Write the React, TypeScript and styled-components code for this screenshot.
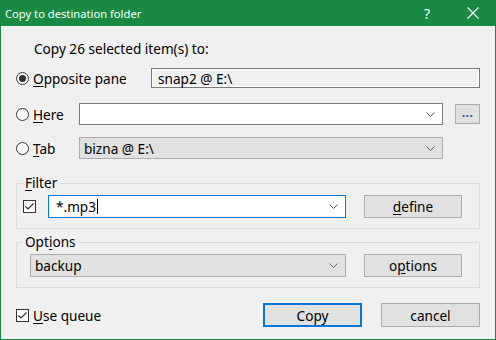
import React from "react";
import styled, { createGlobalStyle } from "styled-components";

const GlobalStyle = createGlobalStyle`
  html, body {
    margin: 0;
    padding: 0;
    background: #f0f0f0;
  }
  * {
    box-sizing: border-box;
  }
`;

const green = "#188a44";
const uiFont = `"Noto Sans", "DejaVu Sans", sans-serif`;

const Window = styled.div`
  width: 496px;
  height: 340px;
  display: flex;
  flex-direction: column;
  background: #f0f0f0;
  border: 1px solid ${green};
  border-top: none;
  font-family: ${uiFont};
  font-size: 13.6px;
  color: #000;
`;

const TitleBar = styled.div`
  height: 26px;
  margin: 0 -1px;
  background: ${green};
  color: #fff;
  display: flex;
  align-items: center;
  font-size: 11.2px;
  padding-left: 5px;
`;

const Title = styled.span`
  flex: 1;
`;

const TitleButton = styled.span`
  width: 46px;
  display: flex;
  justify-content: center;
  align-items: center;
  font-size: 14px;
`;

const Body = styled.div`
  width: 494px;
  flex: 1;
  padding: 14px 15px 0 15px;
  display: flex;
  flex-direction: column;
  align-items: flex-start;
`;

const Heading = styled.div`
  margin-left: 18px;
  height: 18px;
  line-height: 18px;
`;

const Row = styled.div<{ $top: number; $h: number }>`
  width: 464px;
  display: flex;
  align-items: center;
  margin-top: ${(p) => p.$top}px;
  height: ${(p) => p.$h}px;
`;

const Choice = styled.label<{ $w: number }>`
  width: ${(p) => p.$w}px;
  display: flex;
  align-items: center;
  gap: 4px;
  flex-shrink: 0;
`;

const Radio = styled.span<{ $on?: boolean }>`
  width: 13px;
  height: 13px;
  border-radius: 50%;
  border: 1px solid #333;
  background: #fff;
  display: flex;
  align-items: center;
  justify-content: center;
  &::after {
    content: "";
    width: 7px;
    height: 7px;
    border-radius: 50%;
    background: #333;
    display: ${(p) => (p.$on ? "block" : "none")};
  }
`;

const Check = styled.span`
  width: 13px;
  height: 13px;
  border: 1px solid #333;
  background: #fff;
  display: flex;
  align-items: center;
  justify-content: center;
  flex-shrink: 0;
`;

const U = styled.span`
  text-decoration: underline;
  text-underline-offset: 2px;
`;

const Field = styled.div<{ $w: number; $h: number; $kind: "plain" | "white" | "gray" | "focus" }>`
  width: ${(p) => p.$w}px;
  height: ${(p) => p.$h}px;
  flex-shrink: 0;
  display: flex;
  align-items: center;
  padding-left: ${(p) => (p.$kind === "plain" ? 6 : 4)}px;
  border: 1px solid
    ${(p) =>
      p.$kind === "focus" ? "#0078d7" : p.$kind === "gray" ? "#adadad" : "#7a7a7a"};
  background: ${(p) =>
    p.$kind === "white" || p.$kind === "focus" ? "#fff" : p.$kind === "gray" ? "#e1e1e1" : "#f0f0f0"};
  box-shadow: ${(p) => (p.$kind === "plain" ? "inset 0 0 0 1px #fff" : "none")};
`;

const FieldText = styled.span`
  flex: 1;
  display: flex;
  align-items: center;
`;

const Caret = styled.span`
  width: 1px;
  height: 15px;
  background: #000;
  margin-left: 1px;
`;

const Chevron = styled.svg`
  width: 9px;
  height: 5px;
  margin-right: 7px;
`;

const Button = styled.div<{ $w: number; $h: number; $default?: boolean }>`
  width: ${(p) => p.$w}px;
  height: ${(p) => p.$h}px;
  flex-shrink: 0;
  display: flex;
  align-items: center;
  justify-content: center;
  background: #e1e1e1;
  border: ${(p) => (p.$default ? "2px solid #0078d7" : "1px solid #adadad")};
`;

const Dots = styled.span`
  color: #1c4fa0;
  font-weight: bold;
  font-size: 12px;
  letter-spacing: 0.5px;
  margin-top: -4px;
`;

const Group = styled.div<{ $top: number }>`
  width: 464px;
  margin-top: ${(p) => p.$top}px;
  padding-bottom: 10px;
  border: 1px solid #dcdcdc;
  display: flex;
  flex-direction: column;
`;

const GroupTitle = styled.span`
  align-self: flex-start;
  margin: -8px 0 0 6px;
  padding: 0 2px;
  height: 14px;
  line-height: 14px;
  background: #f0f0f0;
`;

const GroupRow = styled.div<{ $pad: number }>`
  display: flex;
  align-items: center;
  margin-top: 5px;
  padding-left: ${(p) => p.$pad}px;
  height: 23px;
`;

const Footer = styled.div`
  width: 464px;
  display: flex;
  align-items: center;
  margin-top: 15px;
  height: 24px;
`;

const Spacer = styled.div`
  flex: 1;
`;

const ChevronIcon = () => (
  <Chevron viewBox="0 0 9 5">
    <path d="M0.5 0.5 L4.5 4.5 L8.5 0.5" stroke="#606060" strokeWidth="1" fill="none" />
  </Chevron>
);

const CheckMark = () => (
  <svg width="11" height="11" viewBox="0 0 11 11">
    <path d="M1.5 5.5 L4 8 L9.5 2.5" stroke="#333" strokeWidth="1.2" fill="none" />
  </svg>
);

export default function App() {
  return (
    <>
      <GlobalStyle />
      <Window>
        <TitleBar>
          <Title>Copy to destination folder</Title>
          <TitleButton>?</TitleButton>
          <TitleButton>
            <svg width="12" height="12" viewBox="0 0 12 12">
              <path d="M0.5 0.5 L11.5 11.5 M11.5 0.5 L0.5 11.5" stroke="#fff" strokeWidth="1.1" />
            </svg>
          </TitleButton>
        </TitleBar>
        <Body>
          <Heading>Copy 26 selected item(s) to:</Heading>
          <Row $top={10} $h={20}>
            <Choice $w={135}>
              <Radio $on />
              <span>
                <U>O</U>pposite pane
              </span>
            </Choice>
            <Field $w={329} $h={20} $kind="plain">
              <FieldText>snap2 @ E:\</FieldText>
            </Field>
          </Row>
          <Row $top={15} $h={22}>
            <Choice $w={63}>
              <Radio />
              <span>
                <U>H</U>ere
              </span>
            </Choice>
            <Field $w={364} $h={22} $kind="white">
              <FieldText />
              <ChevronIcon />
            </Field>
            <Spacer />
            <Button $w={25} $h={20}>
              <Dots>...</Dots>
            </Button>
          </Row>
          <Row $top={12} $h={22}>
            <Choice $w={63}>
              <Radio />
              <span>
                <U>T</U>ab
              </span>
            </Choice>
            <Field $w={364} $h={22} $kind="gray">
              <FieldText>bizna @ E:\</FieldText>
              <ChevronIcon />
            </Field>
          </Row>
          <Group $top={24}>
            <GroupTitle>
              <U>F</U>ilter
            </GroupTitle>
            <GroupRow $pad={6}>
              <Check>
                <CheckMark />
              </Check>
              <Field $w={298} $h={23} $kind="focus" style={{ marginLeft: 12 }}>
                <FieldText style={{ paddingLeft: 3 }}>
                  *.mp3
                  <Caret />
                </FieldText>
                <ChevronIcon />
              </Field>
              <Button $w={98} $h={23} style={{ marginLeft: 18 }}>
                <span>
                  <U>d</U>efine
                </span>
              </Button>
            </GroupRow>
          </Group>
          <Group $top={13}>
            <GroupTitle>
              Opt<U>i</U>ons
            </GroupTitle>
            <GroupRow $pad={13}>
              <Field $w={316} $h={23} $kind="gray">
                <FieldText>backup</FieldText>
                <ChevronIcon />
              </Field>
              <Button $w={98} $h={23} style={{ marginLeft: 18 }}>
                <span>
                  o<U>p</U>tions
                </span>
              </Button>
            </GroupRow>
          </Group>
          <Footer>
            <Check>
              <CheckMark />
            </Check>
            <span style={{ marginLeft: 4 }}>
              <U>U</U>se queue
            </span>
            <Spacer />
            <Button $w={99} $h={24} $default>
              Copy
            </Button>
            <Button $w={99} $h={24} style={{ marginLeft: 19 }}>
              cancel
            </Button>
          </Footer>
        </Body>
      </Window>
    </>
  );
}
